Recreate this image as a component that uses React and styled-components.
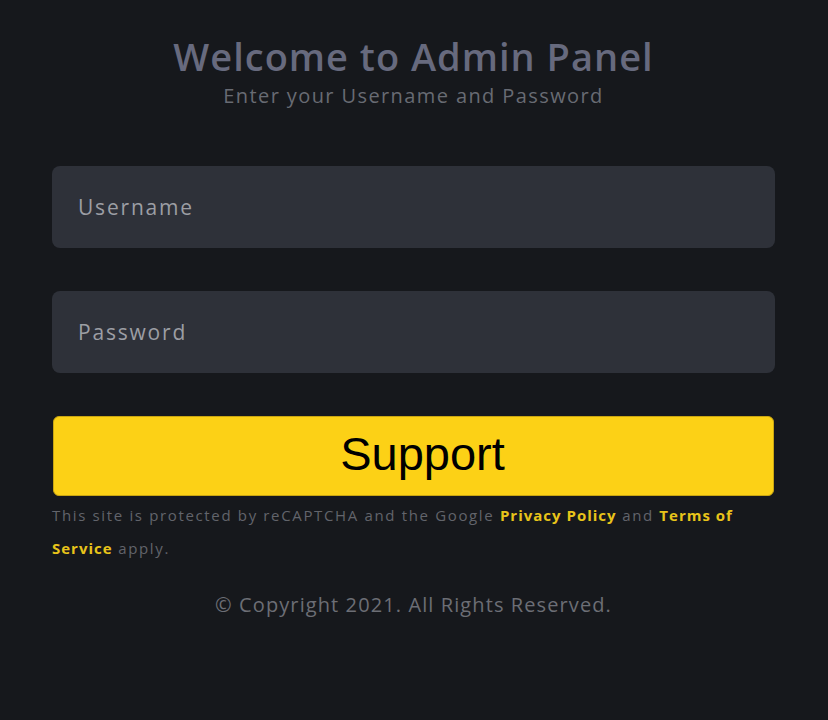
import React from 'react';
import styled, { createGlobalStyle } from 'styled-components';

const GlobalStyle = createGlobalStyle`
  html, body {
    margin: 0;
    padding: 0;
    background: #16181c;
  }
  body {
    font-family: "Open Sans", "Noto Sans", sans-serif;
  }
`;

const Page = styled.div`
  min-height: 720px;
  background: #16181c;
  padding: 32px 53px 0 52px;
  box-sizing: border-box;
`;

const Header = styled.div`
  text-align: center;
  margin-bottom: 57px;
`;

const Title = styled.h1`
  margin: 0;
  font-size: 38px;
  font-weight: 600;
  letter-spacing: 1px;
  line-height: 48px;
  color: #676a7e;
`;

const Subtitle = styled.p`
  margin: 3px 0 0;
  font-size: 20px;
  letter-spacing: 1.4px;
  line-height: 26px;
  color: #686b73;
`;

const Form = styled.form`
  display: flex;
  flex-direction: column;
  gap: 43px;
`;

const Input = styled.input`
  height: 82px;
  box-sizing: border-box;
  border: none;
  border-radius: 8px;
  background: #2e3139;
  padding: 0 26px;
  font-family: "Open Sans", "Noto Sans", sans-serif;
  font-size: 21px;
  letter-spacing: 1.8px;
  color: #e0e0e0;
  outline: none;
  &::placeholder {
    color: #9c9ea4;
  }
`;

const SupportButton = styled.button`
  height: 80px;
  margin: 0 1px;
  padding: 0 0 6px 18px;
  border: 1px solid #c9a512;
  border-radius: 6px;
  background: #fcd116;
  font-family: "Liberation Sans", Arial, sans-serif;
  font-size: 47px;
  color: #000;
  cursor: pointer;
`;

const Notice = styled.p`
  margin: 3px 0 0;
  font-size: 15px;
  letter-spacing: 1.65px;
  line-height: 33px;
  color: #62646b;
`;

const Link = styled.a`
  color: #e8c41a;
  font-weight: 700;
  letter-spacing: 1px;
  text-decoration: none;
`;

const Copyright = styled.p`
  margin: 26px 0 0;
  text-align: center;
  font-size: 20px;
  letter-spacing: 1.1px;
  line-height: 27px;
  color: #6c6e75;
`;

export default function App() {
  return (
    <>
      <GlobalStyle />
      <Page>
        <Header>
          <Title>Welcome to Admin Panel</Title>
          <Subtitle>Enter your Username and Password</Subtitle>
        </Header>
        <Form onSubmit={(e) => e.preventDefault()}>
          <Input type="text" placeholder="Username" />
          <Input type="password" placeholder="Password" />
          <SupportButton type="button">Support</SupportButton>
        </Form>
        <Notice>
          This site is protected by reCAPTCHA and the Google <Link href="#">Privacy Policy</Link> and{' '}
          <Link href="#">Terms of</Link> <Link href="#">Service</Link> apply.
        </Notice>
        <Copyright>© Copyright 2021. All Rights Reserved.</Copyright>
      </Page>
    </>
  );
}
